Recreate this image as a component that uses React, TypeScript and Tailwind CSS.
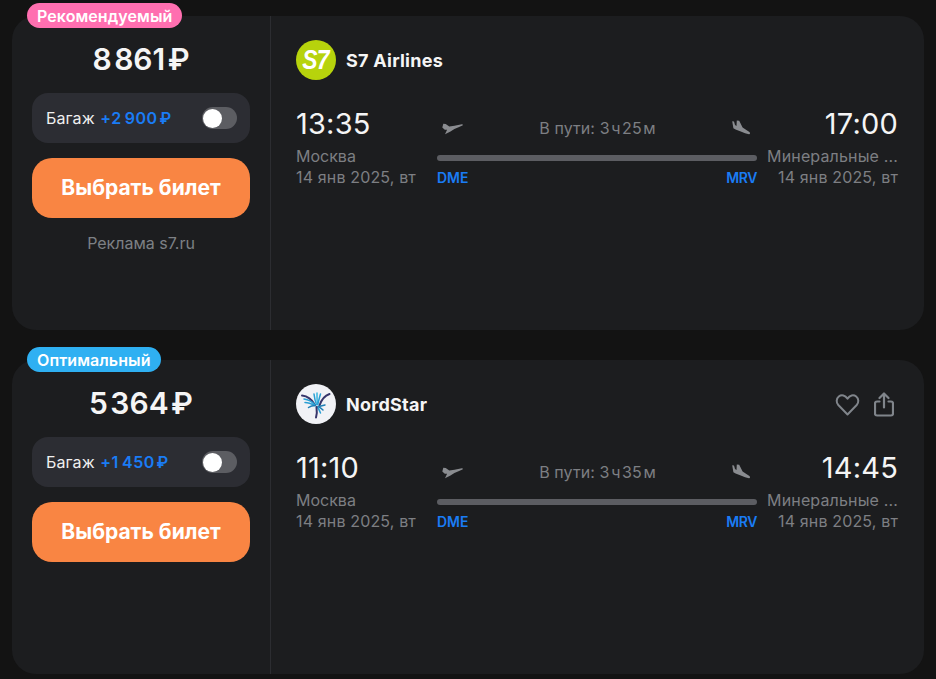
const font = { fontFamily: 'Inter, "Liberation Sans", sans-serif' }

function TakeoffIcon() {
  return (
    <svg width="24" height="16" viewBox="0 0 24 16" fill="#8a8c90">
      <path d="M1.300 7.400 2.300 3.700l2.400.3 3.600 2.600 5.200-.9 7.300-1.500c1.100-.2 1.500.8.600 1.400-2.400 1.400-5.200 2.400-8 3.300L9.500 11.600 4 14.200l2.100-4.500-2.300.1z" />
    </svg>
  )
}

function LandingIcon() {
  return (
    <svg width="24" height="18" viewBox="0 0 24 18" fill="#8a8c90">
      <path d="M2.200 2.200 4 2.500 5 6l1.500 1L6.800 1.400l2.400.4 3.400 6.800 6.800 4.400c1 .7.800 2.300-.4 2.200-2.700-.4-5.200-1.500-7.600-2.400L5.600 10.600 3.400 9.300z" />
    </svg>
  )
}

function S7Logo() {
  return (
    <div className="flex h-10 w-10 shrink-0 items-center justify-center rounded-full bg-[#b7d30c]">
      <span className="scale-x-[0.85] text-[27px] leading-none font-bold tracking-[-1px] text-white italic" style={{ fontFamily: '"Liberation Sans", sans-serif' }}>
        S7
      </span>
    </div>
  )
}

function NordStarLogo() {
  return (
    <div className="h-10 w-10 shrink-0 rounded-full bg-[#f1f2f6]">
      <svg width="40" height="40" viewBox="0 0 40 40" fill="none" strokeLinecap="round">
        <path d="M6 11.500c5 .5 10 4 13 9.500" stroke="#37356b" strokeWidth="2" />
        <path d="M8 15c4 .5 8 2.500 11 6" stroke="#2b9fd4" strokeWidth="1.500" />
        <path d="M9 18.500c3.500 0 7 1.500 10 3" stroke="#2b9fd4" strokeWidth="1.500" />
        <path d="M12.500 23.500c2-1.500 4.500-2 7-2" stroke="#1f7fb5" strokeWidth="1.500" />
        <path d="M18 10c.5 4 1.200 7.500 2.500 10.500" stroke="#2b9fd4" strokeWidth="1.500" />
        <path d="M21 9c0 4 0 8 .4 11.500" stroke="#36b6e0" strokeWidth="1.500" />
        <path d="M24.500 10c-1 3.500-2 7-2.700 10.500" stroke="#2b9fd4" strokeWidth="1.500" />
        <path d="M33.500 10c-4.500 1.500-8 5.500-10 11.500" stroke="#37356b" strokeWidth="2" />
        <path d="M29 21c-2 .5-4 1-6 1.500" stroke="#1f7fb5" strokeWidth="1.500" />
        <path d="M27 26c-1.500-1.500-3-2.500-5-3.500" stroke="#1f7fb5" strokeWidth="1.500" />
        <path d="M24.500 29c-.8-2-1.800-4-3-6" stroke="#2b9fd4" strokeWidth="1.500" />
        <path d="M20 33.500c1-3.500 1-7 .5-10.500" stroke="#37356b" strokeWidth="2" />
      </svg>
    </div>
  )
}

function Actions() {
  return (
    <div className="mr-[4px] flex items-center gap-[14px]">
      <svg width="25" height="24" viewBox="0 0 25 24" fill="none" stroke="#80858b" strokeWidth="2" strokeLinejoin="round">
        <path d="M12.500 22.500 3.300 13C1 10.500 1.200 6.600 3.800 4.500c2.800-2.100 6.400-1.200 8.700 2.100 2.300-3.300 5.900-4.200 8.700-2.100 2.600 2.100 2.800 6 .5 8.500z" />
      </svg>
      <svg width="20" height="25" viewBox="0 0 20 25" fill="none" stroke="#80858b" strokeWidth="2.200" strokeLinecap="round" strokeLinejoin="round">
        <path d="M10 15.500V2M5.500 6 10 1.500 14.500 6" />
        <path d="M5.500 9.500H3C1.900 9.500 1 10.400 1 11.500V21.500c0 1.100.9 2 2 2h14c1.100 0 2-.9 2-2V11.500c0-1.100-.9-2-2-2h-2.500" />
      </svg>
    </div>
  )
}

type Ticket = {
  badge: string
  badgeClass: string
  price: string
  baggage: string
  ad?: string
  airline: string
  logo: React.ReactNode
  actions?: boolean
  depart: string
  arrive: string
  duration: string
}

const tickets: Ticket[] = [
  {
    badge: 'Рекомендуемый',
    badgeClass: 'bg-[#ff6fb0]',
    price: '8\u200a861\u200a₽',
    baggage: '+2\u2009900\u200a₽',
    ad: 'Реклама s7.ru',
    airline: 'S7 Airlines',
    logo: <S7Logo />,
    depart: '13:35',
    arrive: '17:00',
    duration: 'В пути: 3\u200aч\u200a25\u200aм',
  },
  {
    badge: 'Оптимальный',
    badgeClass: 'bg-[#2fb0f2]',
    price: '5\u200a364\u200a₽',
    baggage: '+1\u2009450\u200a₽',
    airline: 'NordStar',
    logo: <NordStarLogo />,
    actions: true,
    depart: '11:10',
    arrive: '14:45',
    duration: 'В пути: 3\u200aч\u200a35\u200aм',
  },
]

function TicketCard({ t }: { t: Ticket }) {
  return (
    <div className="relative flex h-[314px] rounded-[24px] bg-[#1c1d1f]">
      <div className={`absolute top-[-13px] left-[15px] flex h-[25px] items-center rounded-full px-[10px] text-[16px] font-semibold tracking-[0.08px] text-white ${t.badgeClass}`}>
        {t.badge}
      </div>

      <div className="flex w-[259px] shrink-0 flex-col items-center border-r border-[#2c2d31] pt-[26px] pr-[20px] pl-[20px]">
        <div className="text-[30px] leading-[34px] font-semibold text-[#f5f5f5]">{t.price}</div>
        <div className="mt-[17px] flex h-[50px] w-full items-center justify-between rounded-2xl bg-[#2c2d33] pr-[13px] pl-[14px]">
          <div className="text-[16px] tracking-[0.1px] text-[#f0f0f0]">
            Багаж <span className="ml-[1px] font-semibold tracking-[0.5px] text-[#1a7cf5]">{t.baggage}</span>
          </div>
          <div className="flex h-[22px] w-[35px] items-center rounded-full bg-[#5c5d62] pl-[1px]">
            <div className="h-[19px] w-[19px] rounded-full bg-white" />
          </div>
        </div>
        <button className="mt-[15px] h-[60px] w-full rounded-[20px] bg-[#f98543] text-[21px] font-bold text-white">Выбрать билет</button>
        <div className={t.ad ? 'mt-[13px] text-[16px] text-[#7d8085]' : 'hidden'}>{t.ad}</div>
      </div>

      <div className="flex min-w-0 flex-1 flex-col pt-6 pr-[26px] pl-[25px]">
        <div className="flex h-10 items-center">
          {t.logo}
          <div className="ml-[10px] text-[18px] font-bold tracking-[0.25px] text-[#f5f5f5]">{t.airline}</div>
          {t.actions && (
            <div className="ml-auto">
              <Actions />
            </div>
          )}
        </div>

        <div className="mt-[27px] flex">
          <div className="w-[141px] shrink-0">
            <div className="text-[29px] leading-[34px] tracking-[0.2px] text-[#f5f5f5]">{t.depart}</div>
            <div className="mt-[4px] text-[16px] leading-[22px] text-[#7d7f83]">Москва</div>
            <div className="text-[16px] leading-[20px] tracking-[0.15px] text-[#7d7f83]">14 янв 2025, вт</div>
          </div>

          <div className="w-[320px] shrink-0">
            <div className="flex h-[34px] items-center justify-between pt-[7px] pr-[3px] pl-[4px]">
              <TakeoffIcon />
              <div className="text-[16px] tracking-[0.1px] text-[#7d7f83]">{t.duration}</div>
              <LandingIcon />
            </div>
            <div className="mt-[14px] h-[6px] rounded-full bg-[#5c5d62]" />
            <div className="mt-[7px] flex justify-between text-[14px] leading-[20px] font-semibold text-[#1a7cf5]">
              <span>DME</span>
              <span className="tracking-[-0.4px]">MRV</span>
            </div>
          </div>

          <div className="min-w-0 flex-1 text-right">
            <div className="text-[29px] leading-[34px] tracking-[0.2px] text-[#f5f5f5]">{t.arrive}</div>
            <div className="mt-[4px] text-[16px] leading-[22px] tracking-[0.15px] whitespace-nowrap text-[#7d7f83]">Минеральные ...</div>
            <div className="text-[16px] leading-[20px] tracking-[0.15px] whitespace-nowrap text-[#7d7f83]">14 янв 2025, вт</div>
          </div>
        </div>
      </div>
    </div>
  )
}

export default function App() {
  return (
    <div className="h-[679px] w-[936px] overflow-hidden bg-[#131313] pt-4 pr-3 pl-3" style={font}>
      <div className="flex flex-col gap-[30px]">
        {tickets.map((t) => (
          <TicketCard key={t.airline} t={t} />
        ))}
      </div>
    </div>
  )
}
